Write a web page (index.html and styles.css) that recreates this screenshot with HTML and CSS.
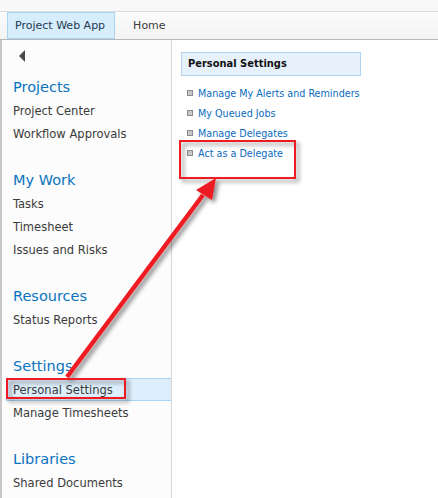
FILE: index.html
```html
<!DOCTYPE html>
<html>
<head>
<meta charset="utf-8">
<link rel="stylesheet" href="styles.css">
</head>
<body>
<div class="topstrip"></div>
<div class="navbar">
  <div class="tab active">Project Web App</div>
  <div class="tab">Home</div>
</div>
<div class="main">
  <div class="leftnav">
    <div class="back"><svg width="8" height="12" viewBox="0 0 8 12"><polygon points="7,0 7,12 1,6" fill="#4a4a4a"/></svg></div>
    <div class="group">
      <div class="heading">Projects</div>
      <div class="item">Project Center</div>
      <div class="item">Workflow Approvals</div>
    </div>
    <div class="group">
      <div class="heading">My Work</div>
      <div class="item">Tasks</div>
      <div class="item">Timesheet</div>
      <div class="item">Issues and Risks</div>
    </div>
    <div class="group">
      <div class="heading">Resources</div>
      <div class="item">Status Reports</div>
    </div>
    <div class="group">
      <div class="heading">Settings</div>
      <div class="item selected">Personal Settings</div>
      <div class="item">Manage Timesheets</div>
    </div>
    <div class="group">
      <div class="heading">Libraries</div>
      <div class="item">Shared Documents</div>
    </div>
  </div>
  <div class="content">
    <div class="sectionhead">Personal Settings</div>
    <ul class="links">
      <li><span class="bullet"></span>Manage My Alerts and Reminders</li>
      <li><span class="bullet"></span>My Queued Jobs</li>
      <li><span class="bullet"></span>Manage Delegates</li>
      <li><span class="bullet"></span>Act as a Delegate</li>
    </ul>
  </div>
</div>
<svg class="annot" width="438" height="498" viewBox="0 0 438 498">
  <defs>
    <filter id="sh" x="-20%" y="-20%" width="140%" height="140%">
      <feGaussianBlur in="SourceAlpha" stdDeviation="2"/>
      <feOffset dx="3" dy="3" result="b"/>
      <feComponentTransfer><feFuncA type="linear" slope="0.45"/></feComponentTransfer>
      <feMerge><feMergeNode/><feMergeNode in="SourceGraphic"/></feMerge>
    </filter>
  </defs>
  <g filter="url(#sh)">
    <rect x="180" y="141" width="115" height="37" fill="none" stroke="#ee1c24" stroke-width="2"/>
    <rect x="7" y="379" width="118" height="19" fill="none" stroke="#ee1c24" stroke-width="2"/>
    <line x1="67" y1="377" x2="203" y2="195" stroke="#ee1c24" stroke-width="4.5"/>
    <polygon points="216,178 196,190 212,200" fill="#ee1c24"/>
  </g>
</svg>
</body>
</html>
```
FILE: styles.css
```css
html, body { margin: 0; padding: 0; }
body {
  width: 438px;
  height: 498px;
  overflow: hidden;
  background: #fff;
  font-family: "DejaVu Sans", Verdana, sans-serif;
  position: relative;
}
.topstrip {
  height: 11px;
  background: #f8f8f8;
  border-bottom: 1px solid #dcdcdc;
}
.navbar {
  height: 27px;
  display: flex;
  align-items: stretch;
  padding-left: 7px;
  background: linear-gradient(#fbfbfb, #f3f3f3);
  border-bottom: 1px solid #b8b8b8;
}
.tab {
  font-size: 11px;
  color: #3b3b3b;
  display: flex;
  align-items: center;
  padding: 0 8px 0 7px;
  margin-right: 10px;
  border: 1px solid transparent;
}
.tab.active {
  background: #d6edfc;
  border-color: #a9d5f3;
  color: #1e3a55;
  padding-right: 9px;
}
.main {
  display: flex;
  height: 458px;
}
.leftnav {
  width: 169px;
  border-left: 2px solid #c8c8c8;
  border-right: 1px solid #d6d6d6;
  background: #fcfcfc;
}
.back {
  height: 14px;
  padding: 7px 0 0 16px;
}
.group { margin-bottom: 23px; }
.heading {
  font-size: 14.5px;
  color: #0a73c0;
  padding-left: 11px;
  height: 24px;
  line-height: 24px;
  margin-top: 11px;
}
.back + .group .heading { margin-top: 14px; }
.item {
  font-family: "DejaVu Sans Condensed", "DejaVu Sans", sans-serif;
  font-size: 12.8px;
  color: #3b3b3b;
  height: 23px;
  line-height: 23px;
  padding-left: 11px;
}
.item.selected {
  background: #ddeefc;
  border: 1px solid #a9d4f5;
  border-right: none;
  margin-left: 4px;
  padding-left: 6px;
  height: 21px;
  line-height: 21px;
}
.content {
  flex: 1;
  padding: 12px 0 0 9px;
}
.sectionhead {
  width: 172px;
  height: 22px;
  line-height: 22px;
  background: #e7f1fc;
  border: 1px solid #b5d3f1;
  font-family: "DejaVu Sans Condensed", "DejaVu Sans", sans-serif;
  font-size: 11px;
  font-weight: bold;
  color: #111;
  padding-left: 6px;
}
.links {
  list-style: none;
  margin: 8px 0 0 0;
  padding: 0;
}
.links li {
  font-family: "DejaVu Sans Condensed", "DejaVu Sans", sans-serif;
  font-size: 10.7px;
  color: #0a6cc0;
  height: 20px;
  line-height: 20px;
  display: flex;
  align-items: center;
  padding-left: 6px;
}
.bullet {
  width: 4px;
  height: 4px;
  background: #c8c8c8;
  border: 1px solid #8a8a8a;
  margin-right: 5px;
  margin-top: -3px;
}
.annot {
  position: absolute;
  left: 0;
  top: 0;
  pointer-events: none;
}
```
